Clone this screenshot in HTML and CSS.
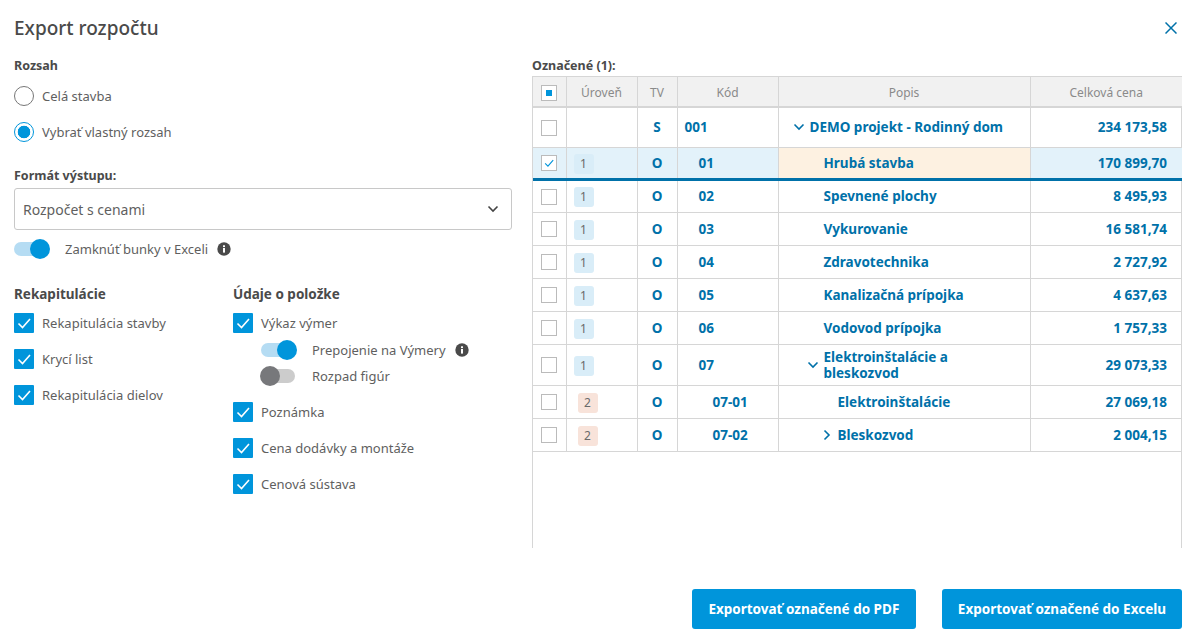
FILE: index.html
```html
<!DOCTYPE html>
<html lang="sk">
<head>
    <meta charset="UTF-8">
    <title>Export rozpočtu</title>
    <link rel="stylesheet" href="styles.css">
</head>
<body>
    <svg class="sprites" width="0" height="0">
        <symbol id="tick" viewBox="0 0 20 20"><path d="M4.5 10.5l4 4 7.5-8.5" fill="none" stroke="currentColor" stroke-width="1.6"/></symbol>
        <symbol id="info" viewBox="0 0 14 14"><circle cx="7" cy="7" r="6.7" fill="#4a4a4a"/><rect x="6" y="6" width="2" height="4.6" fill="#fff"/><rect x="6" y="3.3" width="2" height="1.8" fill="#fff"/></symbol>
        <symbol id="down" viewBox="0 0 12 8"><path d="M1.5 1.5l4.5 4.5 4.5-4.5" fill="none" stroke="currentColor" stroke-width="1.6"/></symbol>
        <symbol id="right" viewBox="0 0 8 12"><path d="M1.5 1.5l4.5 4.5-4.5 4.5" fill="none" stroke="currentColor" stroke-width="1.6"/></symbol>
    </svg>

    <div class="dialog">
        <div class="dialog-head">
            <h1>Export rozpočtu</h1>
            <svg class="close" width="12" height="12" viewBox="0 0 12 12"><path d="M.5.5l11 11M11.5.5l-11 11" stroke="currentColor" stroke-width="1.5"/></svg>
        </div>

        <div class="dialog-body">
            <div class="options">
                <div class="label">Rozsah</div>
                <div class="field"><span class="radio"></span>Celá stavba</div>
                <div class="field"><span class="radio on"></span>Vybrať vlastný rozsah</div>

                <div class="label format-label">Formát výstupu:</div>
                <div class="select">Rozpočet s cenami<svg class="select-arrow" width="12" height="8"><use href="#down"/></svg></div>
                <div class="switch-row lock-row">
                    <span class="switch on"></span><span class="switch-text">Zamknúť bunky v Exceli</span>
                    <svg class="info" width="14" height="14"><use href="#info"/></svg>
                </div>

                <div class="columns">
                    <div class="col-recap">
                        <h2>Rekapitulácie</h2>
                        <div class="field"><span class="check"><svg width="20" height="20"><use href="#tick"/></svg></span>Rekapitulácia stavby</div>
                        <div class="field"><span class="check"><svg width="20" height="20"><use href="#tick"/></svg></span>Krycí list</div>
                        <div class="field"><span class="check"><svg width="20" height="20"><use href="#tick"/></svg></span>Rekapitulácia dielov</div>
                    </div>
                    <div class="col-items">
                        <h2>Údaje o položke</h2>
                        <div class="field"><span class="check"><svg width="20" height="20"><use href="#tick"/></svg></span>Výkaz výmer</div>
                        <div class="sub-switches">
                            <div class="switch-row">
                                <span class="switch on"></span><span class="switch-text">Prepojenie na Výmery</span>
                                <svg class="info" width="14" height="14"><use href="#info"/></svg>
                            </div>
                            <div class="switch-row"><span class="switch"></span><span class="switch-text">Rozpad figúr</span></div>
                        </div>
                        <div class="field"><span class="check"><svg width="20" height="20"><use href="#tick"/></svg></span>Poznámka</div>
                        <div class="field"><span class="check"><svg width="20" height="20"><use href="#tick"/></svg></span>Cena dodávky a montáže</div>
                        <div class="field"><span class="check"><svg width="20" height="20"><use href="#tick"/></svg></span>Cenová sústava</div>
                    </div>
                </div>
            </div>

            <div class="selection">
                <div class="label">Označené (1):</div>
                <div class="table-wrap">
                    <table>
                        <colgroup>
                            <col class="c-check"><col class="c-level"><col class="c-tv"><col class="c-code"><col class="c-desc"><col class="c-price">
                        </colgroup>
                        <thead>
                            <tr>
                                <th><span class="box partial"></span></th>
                                <th>Úroveň</th>
                                <th>TV</th>
                                <th>Kód</th>
                                <th>Popis</th>
                                <th>Celková cena</th>
                            </tr>
                        </thead>
                        <tbody>
                            <tr class="root">
                                <td><span class="box"></span></td><td></td>
                                <td class="tv">S</td><td class="code">001</td>
                                <td class="desc d0"><svg class="tree" width="12" height="8"><use href="#down"/></svg>DEMO projekt - Rodinný dom</td>
                                <td class="price">234 173,58</td>
                            </tr>
                            <tr class="selected">
                                <td><span class="box ticked"><svg width="16" height="16" viewBox="0 0 20 20"><use href="#tick"/></svg></span></td><td><span class="badge">1</span></td>
                                <td class="tv">O</td><td class="code l1">01</td>
                                <td class="desc d1">Hrubá stavba</td>
                                <td class="price">170 899,70</td>
                            </tr>
                            <tr>
                                <td><span class="box"></span></td><td><span class="badge">1</span></td>
                                <td class="tv">O</td><td class="code l1">02</td>
                                <td class="desc d1">Spevnené plochy</td>
                                <td class="price">8 495,93</td>
                            </tr>
                            <tr>
                                <td><span class="box"></span></td><td><span class="badge">1</span></td>
                                <td class="tv">O</td><td class="code l1">03</td>
                                <td class="desc d1">Vykurovanie</td>
                                <td class="price">16 581,74</td>
                            </tr>
                            <tr>
                                <td><span class="box"></span></td><td><span class="badge">1</span></td>
                                <td class="tv">O</td><td class="code l1">04</td>
                                <td class="desc d1">Zdravotechnika</td>
                                <td class="price">2 727,92</td>
                            </tr>
                            <tr>
                                <td><span class="box"></span></td><td><span class="badge">1</span></td>
                                <td class="tv">O</td><td class="code l1">05</td>
                                <td class="desc d1">Kanalizačná prípojka</td>
                                <td class="price">4 637,63</td>
                            </tr>
                            <tr>
                                <td><span class="box"></span></td><td><span class="badge">1</span></td>
                                <td class="tv">O</td><td class="code l1">06</td>
                                <td class="desc d1">Vodovod prípojka</td>
                                <td class="price">1 757,33</td>
                            </tr>
                            <tr class="tall">
                                <td><span class="box"></span></td><td><span class="badge">1</span></td>
                                <td class="tv">O</td><td class="code l1">07</td>
                                <td class="desc d1"><svg class="tree" width="12" height="8"><use href="#down"/></svg>Elektroinštalácie a<br>bleskozvod</td>
                                <td class="price">29 073,33</td>
                            </tr>
                            <tr>
                                <td><span class="box"></span></td><td><span class="badge two">2</span></td>
                                <td class="tv">O</td><td class="code l2">07-01</td>
                                <td class="desc d2">Elektroinštalácie</td>
                                <td class="price">27 069,18</td>
                            </tr>
                            <tr>
                                <td><span class="box"></span></td><td><span class="badge two">2</span></td>
                                <td class="tv">O</td><td class="code l2">07-02</td>
                                <td class="desc d2"><svg class="tree tree-right" width="8" height="12"><use href="#right"/></svg>Bleskozvod</td>
                                <td class="price">2 004,15</td>
                            </tr>
                        </tbody>
                    </table>
                </div>
            </div>
        </div>

        <div class="dialog-foot">
            <button class="btn btn-pdf">Exportovať označené do PDF</button>
            <button class="btn">Exportovať označené do Excelu</button>
        </div>
    </div>
</body>
</html>
```

FILE: styles.css
```css
* {
    box-sizing: border-box;
}
body {
    font-family: "Noto Sans", "Open Sans", sans-serif;
    margin: 0;
    background: #fff;
    color: #5f5f5f;
    font-size: 13px;
}
.sprites {
    position: absolute;
}
.dialog {
    width: 1197px;
    height: 641px;
    padding: 0 15px 0 14px;
    overflow: hidden;
}
.dialog-head {
    display: flex;
    justify-content: space-between;
    align-items: center;
    height: 56px;
}
.dialog-head h1 {
    margin: 0;
    font-size: 19px;
    font-weight: 500;
    color: #4a4a4a;
}
.close {
    color: #0071a9;
    margin-right: 5px;
}
.dialog-body {
    display: flex;
    height: 502px;
}

/* left side */
.options {
    width: 498px;
    margin-right: 20px;
}
.label {
    font-size: 12.5px;
    font-weight: 700;
    color: #4a4a4a;
    height: 20px;
    line-height: 20px;
}
.field {
    display: flex;
    align-items: center;
    height: 20px;
    margin-top: 16px;
    line-height: 20px;
}
.radio {
    width: 20px;
    height: 20px;
    border: 1px solid #777;
    border-radius: 50%;
    margin-right: 8px;
}
.radio.on {
    border-color: #0095db;
    background: radial-gradient(circle, #0095db 0 6px, #fff 6.6px);
}
.options > .label + .field {
    margin-top: 10px;
}
.format-label {
    margin-top: 24px;
}
.select {
    display: flex;
    justify-content: space-between;
    align-items: center;
    height: 42px;
    margin-top: 2px;
    padding: 0 12px 0 8px;
    border: 1px solid #c8c8c8;
    border-radius: 3px;
    font-size: 14px;
}
.select-arrow {
    color: #444;
}
.switch-row {
    display: flex;
    align-items: center;
    height: 26px;
}
.lock-row {
    margin-top: 6px;
}
.switch {
    position: relative;
    width: 34px;
    height: 14px;
    border-radius: 7px;
    background: #ccc;
    margin-right: 17px;
    flex: none;
}
.switch::after {
    content: "";
    position: absolute;
    top: -3px;
    left: -1px;
    width: 20px;
    height: 20px;
    border-radius: 50%;
    background: #77787b;
}
.switch.on {
    background: #b5dcf3;
}
.switch.on::after {
    left: 16px;
    background: #0095db;
}
.info {
    margin-left: 9px;
}
.columns {
    display: flex;
    margin-top: 22px;
}
.col-recap {
    width: 219px;
}
.columns h2 {
    margin: 0;
    height: 20px;
    line-height: 20px;
    font-size: 13.5px;
    font-weight: 700;
    color: #4a4a4a;
}
.columns h2 + .field {
    margin-top: 9px;
}
.check {
    display: flex;
    width: 20px;
    height: 20px;
    border-radius: 1px;
    background: #0095db;
    color: #fff;
    margin-right: 8px;
}
.sub-switches {
    margin: 4px 0 0 28px;
}
.sub-switches .switch-row + .switch-row {
    margin-top: 0;
}
.sub-switches + .field {
    margin-top: 13px;
}

/* right side */
.selection {
    width: 650px;
}
.table-wrap {
    height: 472px;
    margin-top: 0;
    border: 1px solid #d6d6d6;
    border-bottom: none;
}
table {
    width: 649px;
    table-layout: fixed;
    border-collapse: collapse;
    color: #0071a9;
    font-size: 13.5px;
    font-weight: 700;
}
.c-check { width: 33px; }
.c-level { width: 71px; }
.c-tv { width: 40px; }
.c-code { width: 101px; }
.c-desc { width: 252px; }
.c-price { width: 152px; }
th {
    height: 30px;
    background: #f1f1f1;
    border-left: 1px solid #d6d6d6;
    border-bottom: 2px solid #d6d6d6;
    color: #8a8a8a;
    font-size: 12px;
    font-weight: 400;
    padding: 1px 0 0;
}
td {
    height: 33px;
    padding: 0;
    border-left: 1px solid #d6d6d6;
    border-bottom: 1px solid #d6d6d6;
    line-height: 16px;
}
th:first-child, td:first-child {
    border-left: none;
    text-align: center;
}
.root td {
    height: 40px;
}
.tall td {
    height: 41px;
}
.box {
    display: inline-flex;
    align-items: center;
    justify-content: center;
    width: 16px;
    height: 16px;
    border: 1px solid #bbb;
    background: #fff;
    vertical-align: middle;
}
.box.partial::after {
    content: "";
    width: 6px;
    height: 6px;
    background: #0095db;
}
.box.ticked {
    color: #0095db;
}
.badge {
    display: block;
    width: 20px;
    height: 20px;
    margin: 2px 0 0 7px;
    border-radius: 3px;
    background: #d9edf8;
    color: #6a6a6a;
    font-size: 12px;
    font-weight: 400;
    line-height: 20px;
    text-align: center;
}
.badge.two {
    margin-left: 11px;
    background: #f8e3da;
}
.tv {
    text-align: center;
}
.code {
    padding-left: 7px;
}
.code.l1 {
    padding-left: 21px;
}
.code.l2 {
    padding-left: 35px;
}
.desc {
    position: relative;
}
.desc.d0 { padding-left: 31px; }
.desc.d1 { padding-left: 45px; }
.desc.d2 { padding-left: 59px; }
.tree {
    position: absolute;
    top: 50%;
    margin-top: -4px;
    margin-left: -17px;
}
.tree-right {
    margin-top: -6px;
    margin-left: -15px;
}
.price {
    text-align: right;
    padding-right: 15px;
}
.selected td {
    background: #e3f2fa;
    border-bottom: 3px solid #0071a9;
    height: 32px;
}
.selected .desc {
    background: #fdf1e1;
}

/* footer */
.dialog-foot {
    display: flex;
    justify-content: flex-end;
    gap: 26px;
    margin-top: -1px;
    padding-top: 32px;
}
.btn {
    height: 40px;
    padding: 0 16px;
    border: none;
    border-radius: 3px;
    background: #0095db;
    color: #fff;
    font-family: inherit;
    font-size: 13.5px;
    font-weight: 700;
}
.btn-pdf {
    width: 224px;
}
```
